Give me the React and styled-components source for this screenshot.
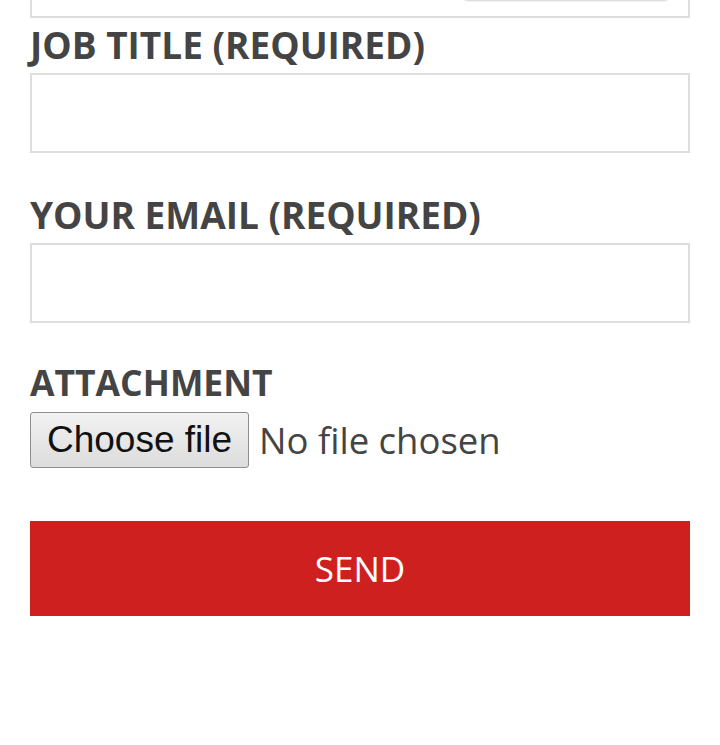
import React from "react";
import styled, { createGlobalStyle } from "styled-components";

const GlobalStyle = createGlobalStyle`
  html, body {
    margin: 0;
    padding: 0;
    background: #ffffff;
  }
  body {
    font-family: "Open Sans", "Liberation Sans", sans-serif;
    overflow: hidden;
  }
`;

const Form = styled.form`
  display: flex;
  flex-direction: column;
  padding: 0 30px;
  height: 745px;
`;

const Field = styled.div`
  display: flex;
  flex-direction: column;
  margin-top: ${(p) => p.$top || 0}px;
`;

const Label = styled.label`
  display: block;
  font-family: "Open Sans", sans-serif;
  font-weight: 700;
  font-size: ${(p) => p.$size || 37}px;
  line-height: 40px;
  color: #444444;
  text-transform: uppercase;
  margin-bottom: ${(p) => p.$gap || 8}px;
`;

const TextInput = styled.input`
  box-sizing: border-box;
  width: 100%;
  height: 80px;
  margin: 0;
  border: 2px solid #dddddd;
  background: #ffffff;
  font-size: 30px;
  padding: 0 14px;
  outline: none;
`;

const CutBox = styled.div`
  position: relative;
  box-sizing: border-box;
  height: 80px;
  margin-top: -62px;
  border: 2px solid #dddddd;
  background: #ffffff;
`;

const Widget = styled.div`
  position: absolute;
  right: 20px;
  bottom: 16px;
  width: 204px;
  height: 30px;
  border-radius: 4px;
  background: #fafafa;
  box-shadow: 0 1px 2px rgba(0, 0, 0, 0.18);
`;

const FileRow = styled.div`
  display: flex;
  align-items: center;
  gap: 10px;
`;

const HiddenInput = styled.input`
  display: none;
`;

const ChooseButton = styled.label`
  box-sizing: border-box;
  display: flex;
  align-items: center;
  justify-content: center;
  width: 219px;
  height: 56px;
  border: 1px solid #8e8e8e;
  border-radius: 3px;
  background: linear-gradient(#f2f2f2, #dcdcdc);
  font-family: "Liberation Sans", Arial, sans-serif;
  font-size: 37px;
  color: #111111;
  cursor: pointer;
`;

const FileName = styled.span`
  font-family: "Open Sans", sans-serif;
  font-size: 36.5px;
  color: #444444;
`;

const SendButton = styled.button`
  margin-top: 53px;
  width: 100%;
  height: 95px;
  border: none;
  background: #cf2020;
  color: #ffffff;
  font-family: "Open Sans", sans-serif;
  font-size: 35px;
  cursor: pointer;
`;

export default function App() {
  return (
    <>
      <GlobalStyle />
      <Form onSubmit={(e) => e.preventDefault()}>
        <CutBox>
          <Widget />
        </CutBox>
        <Field $top={7}>
          <Label htmlFor="job">Job Title (required)</Label>
          <TextInput id="job" type="text" />
        </Field>
        <Field $top={42}>
          <Label htmlFor="email">Your Email (required)</Label>
          <TextInput id="email" type="email" />
        </Field>
        <Field $top={39}>
          <Label $size={35.5} $gap={10}>Attachment</Label>
          <FileRow>
            <ChooseButton htmlFor="file">Choose file</ChooseButton>
            <HiddenInput id="file" type="file" />
            <FileName>No file chosen</FileName>
          </FileRow>
        </Field>
        <SendButton type="submit">SEND</SendButton>
      </Form>
    </>
  );
}
